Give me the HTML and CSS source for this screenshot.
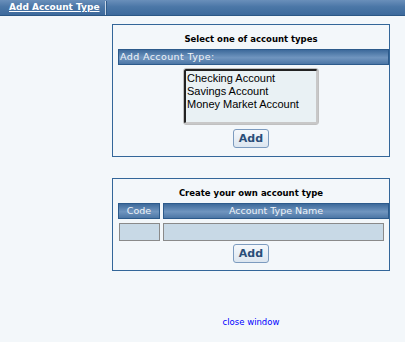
FILE: index.html
```html
<!DOCTYPE html>
<html lang="en">
<head>
    <meta charset="UTF-8">
    <title>Add Account Type</title>
    <link rel="stylesheet" href="styles.css">
</head>
<body>
    <div class="topbar">
        <a class="topbar-title" href="#">Add Account Type</a>
        <span class="topbar-sep"></span>
    </div>
    <div class="content">
        <!-- Pick from existing types -->
        <div class="panel panel-select">
            <div class="panel-title">Select one of account types</div>
            <div class="grid-head grid-head-left">Add Account Type:</div>
            <select class="type-list" size="4">
                <option>Checking Account</option>
                <option>Savings Account</option>
                <option>Money Market Account</option>
            </select>
            <button type="button" class="add-button">Add</button>
        </div>
        <!-- Custom type -->
        <div class="panel panel-create">
            <div class="panel-title">Create your own account type</div>
            <div class="create-row">
                <div class="grid-head col-code">Code</div>
                <div class="grid-head col-name">Account Type Name</div>
            </div>
            <div class="create-row input-row">
                <input type="text" class="field field-code">
                <input type="text" class="field field-name">
            </div>
            <button type="button" class="add-button">Add</button>
        </div>
        <a class="close-link" href="#">close window</a>
    </div>
</body>
</html>
```
FILE: styles.css
```css
body {
    margin: 0;
    padding: 0;
    background: #f3f7fa;
    font-family: 'DejaVu Sans', Verdana, sans-serif;
    font-size: 9px;
    color: #000;
}
/* Blue title strip along the top */
.topbar {
    height: 15px;
    display: flex;
    align-items: stretch;
    background: linear-gradient(#6a8fba, #4b77a7 45%, #3d6a9c);
    border-bottom: 1px solid #2b5785;
}
.topbar-title {
    box-sizing: border-box;
    width: 105px;
    padding: 1px 0 0 9px;
    font-weight: bold;
    font-size: 9px;
    line-height: 13px;
    color: #fff;
    white-space: nowrap;
}
.topbar-sep {
    width: 1px;
    margin-top: 1px;
    background: #c9d7e6;
    border-right: 1px solid #2f5b8a;
}
.content {
    width: 278px;
    margin-left: 112px;
}
.panel {
    border: 1px solid #336699;
    padding: 0 0 7px 0;
    display: flex;
    flex-direction: column;
    align-items: center;
}
.panel-select {
    margin-top: 8px;
    height: 124px;
}
.panel-create {
    margin-top: 21px;
    height: 84px;
}
.panel-title {
    font-weight: bold;
    font-size: 8.5px;
    margin-top: 8px;
    line-height: 12px;
    margin-bottom: 4px;
}
.grid-head {
    box-sizing: border-box;
    height: 16px;
    line-height: 14px;
    font-size: 9.5px;
    color: #eef3f8;
    background: linear-gradient(#3d6a9b, #7095bf 55%, #4c76a5);
    border: 1px solid #2c5a8b;
    text-align: center;
}
.grid-head-left {
    align-self: stretch;
    text-align: left;
    margin-left: 5px;
    padding-left: 1px;
    margin-bottom: 3px;
    letter-spacing: 0.4px;
}
.type-list {
    width: 134px;
    height: 55px;
    margin: 1px 0 0 0;
    padding: 1px 1px 0 1px;
    border: 2px solid;
    border-color: #222 #c8c8c8 #c8c8c8 #222;
    outline: 1px solid #c0c0c0;
    background: #e9f1f4;
    font-family: 'Liberation Sans', Arial, sans-serif;
    font-size: 11px;
    overflow: hidden;
}
.type-list option {
    padding: 0;
    line-height: 13px;
}
.add-button {
    margin-top: 5px;
    width: 36px;
    height: 19px;
    padding: 0;
    border: 1px solid #7c9bbf;
    border-radius: 3px;
    background: linear-gradient(#f5f8fb, #dce6f0);
    color: #2a4d78;
    font-family: 'DejaVu Sans', Verdana, sans-serif;
    font-weight: bold;
    font-size: 11px;
}
.create-row {
    align-self: stretch;
    display: flex;
    gap: 3px;
    margin-left: 5px;
}
.col-code {
    width: 42px;
}
.col-name {
    flex: 1;
}
.input-row {
    margin-top: 4px;
    gap: 3px;
    margin-left: 6px;
    margin-right: 5px;
}
.field {
    box-sizing: border-box;
    height: 18px;
    margin: 0;
    border: 1px solid #8a8a8a;
    background: #c8d9e6;
}
.field-code {
    width: 41px;
}
.field-name {
    flex: 1;
}
.panel-create .add-button {
    margin-top: 3px;
}
.close-link {
    display: block;
    margin-top: 46px;
    text-align: center;
    color: #0000ff;
    text-decoration: none;
    font-size: 8.5px;
}
```
